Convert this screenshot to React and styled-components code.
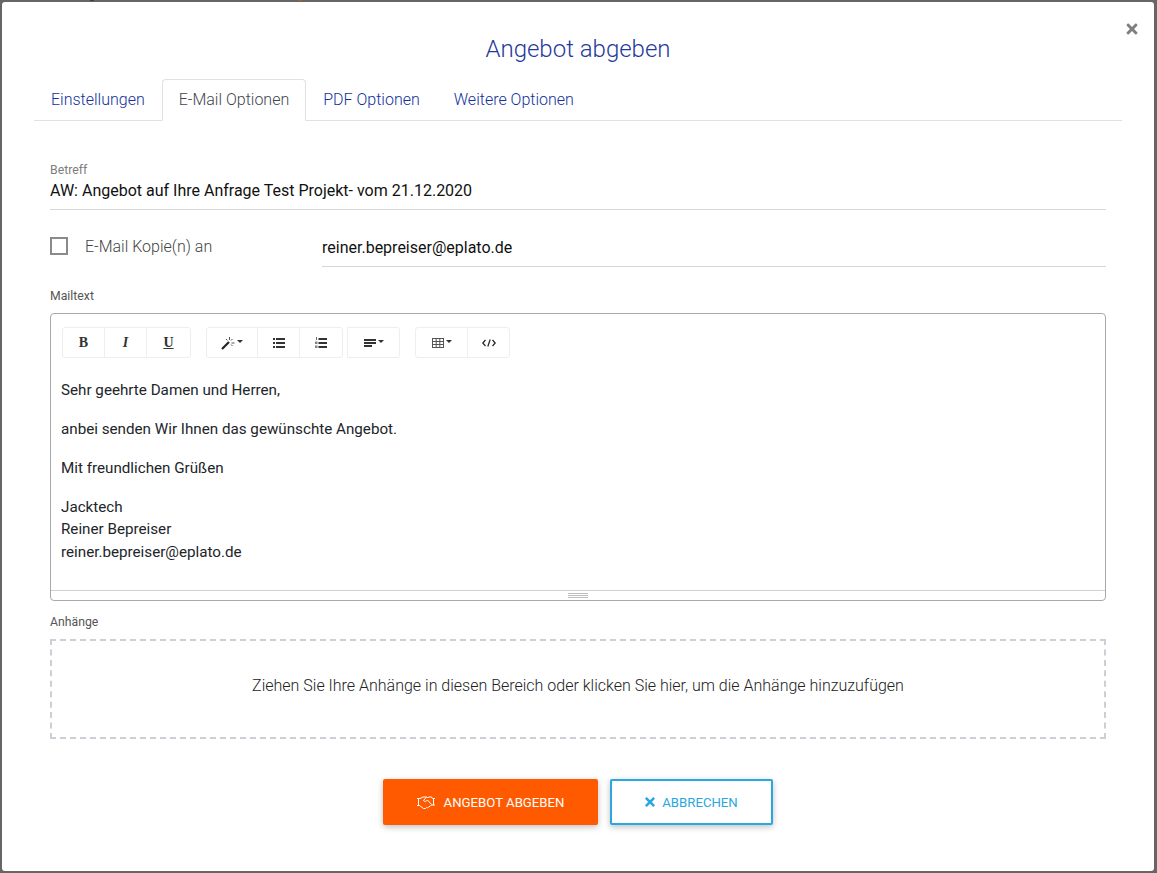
import React from 'react';
import styled, { createGlobalStyle } from 'styled-components';
import { FaTimes } from 'react-icons/fa';

const Global = createGlobalStyle`
  html, body { margin: 0; padding: 0; height: 100%; background: #666; }
  body { font-family: Roboto, "Liberation Sans", sans-serif; overflow: hidden; }
`;

const Backdrop = styled.div`
  position: relative;
  height: 873px;
  padding: 2px 3px 2px 2px;
  box-sizing: border-box;
`;

// bits of the page behind the dialog that show above its top edge
const Peek = styled.span`
  position: absolute;
  top: 0;
  left: ${p => p.$x}px;
  width: 4px;
  height: 1px;
  border-radius: 0 0 2px 2px;
  background: ${p => p.$color};
`;

const Modal = styled.div`
  position: relative;
  height: 869px;
  background: #fff;
  border-radius: 3px;
  padding: 0 32px;
  box-sizing: border-box;
`;

const Close = styled.span`
  position: absolute;
  top: 19px;
  right: 14px;
  display: flex;
  color: #7f7f7f;
  font-size: 16px;
`;

const Title = styled.h2`
  margin: 0;
  padding-top: 32px;
  height: 77px;
  box-sizing: border-box;
  text-align: center;
  font-size: 24px;
  line-height: 30px;
  font-weight: 300;
  color: #1f3a9c;
`;

const Tabs = styled.div`
  display: flex;
  height: 42px;
  box-sizing: border-box;
  border-bottom: 1px solid #dee2e6;
`;

const Tab = styled.div`
  padding: 0 16px;
  height: 42px;
  box-sizing: border-box;
  line-height: 40px;
  font-size: 16px;
  font-weight: 300;
  color: ${p => (p.$active ? '#3f4650' : '#12309c')};
  background: ${p => (p.$active ? '#fff' : 'transparent')};
  border: 1px solid ${p => (p.$active ? '#dee2e6' : 'transparent')};
  border-bottom-color: ${p => (p.$active ? '#fff' : 'transparent')};
  border-radius: 4px 4px 0 0;
`;

const Form = styled.div`
  padding: 0 16px;
`;

const SmallLabel = styled.div`
  font-size: 12.25px;
  line-height: 14px;
  color: ${p => (p.$muted ? '#7d7d7d' : '#555')};
`;

const SubjectField = styled.div`
  padding-top: 42px;
  height: 89px;
  box-sizing: border-box;
  border-bottom: 1px solid #d3d6dc;
`;

const Value = styled.div`
  font-size: 16px;
  line-height: 24px;
  color: #111;
`;

const SubjectValue = styled(Value)`
  margin-top: 2px;
`;

const CopyRow = styled.div`
  display: flex;
  height: 57px;
  align-items: flex-start;
`;

const CopyLabel = styled.div`
  display: flex;
  align-items: center;
  width: 272px;
  padding-top: 27px;
  color: #444;
  font-size: 16px;
  font-weight: 300;
  line-height: 20px;
`;

const Checkbox = styled.span`
  width: 14px;
  height: 14px;
  border: 2px solid #8a8a8a;
  margin-right: 17px;
  margin-top: -2px;
`;

const CopyField = styled.div`
  flex: 1;
  height: 57px;
  padding-top: 26px;
  box-sizing: border-box;
  border-bottom: 1px solid #d3d6dc;
`;

const MailLabel = styled(SmallLabel)`
  margin-top: 22px;
`;

const Editor = styled.div`
  margin-top: 10px;
  height: 288px;
  box-sizing: border-box;
  border: 1px solid #a9a9a9;
  border-radius: 4px;
  display: flex;
  flex-direction: column;
`;

const Toolbar = styled.div`
  display: flex;
  padding: 13px 0 0 11px;
`;

const Group = styled.div`
  display: flex;
  margin-right: ${p => p.$gap}px;
`;

const ToolButton = styled.div`
  width: ${p => p.$w}px;
  height: 29px;
  border: 1px solid #eceef1;
  margin-left: -1px;
  display: flex;
  align-items: center;
  justify-content: center;
  gap: 2px;
  color: #333;
  &:first-child { margin-left: 0; border-radius: 3px 0 0 3px; }
  &:last-child { border-radius: 0 3px 3px 0; }
`;

const ToolLetter = styled.span`
  font-family: "Liberation Serif", serif;
  font-size: 14px;
  font-weight: 700;
  color: #333;
  font-style: ${p => (p.$italic ? 'italic' : 'normal')};
  text-decoration: ${p => (p.$underline ? 'underline' : 'none')};
`;

const Caret = styled.span`
  width: 0;
  height: 0;
  margin-top: -2px;
  border: 3px solid transparent;
  border-top-color: #333;
  border-bottom: 0;
`;

const EditorBody = styled.div`
  flex: 1;
  padding: 21px 10px 0;
  font-size: 15.2px;
  line-height: 22.4px;
  color: #212529;
`;

const Para = styled.p`
  margin: 0 0 16.6px;
`;

const Resizer = styled.div`
  height: 9px;
  border-top: 1px solid #d0d0d0;
  display: flex;
  flex-direction: column;
  align-items: center;
  justify-content: center;
  gap: 1px;
`;

const Grip = styled.span`
  width: 20px;
  height: 1px;
  background: #bdbdbd;
`;

const AttachLabel = styled(SmallLabel)`
  margin-top: 14px;
`;

const Drop = styled.div`
  margin-top: 10px;
  height: 100px;
  padding-bottom: 7px;
  box-sizing: border-box;
  border: 2px dashed #ccd0d6;
  display: flex;
  align-items: center;
  justify-content: center;
  font-size: 16px;
  font-weight: 300;
  color: #222;
`;

const Actions = styled.div`
  display: flex;
  justify-content: center;
  gap: 12px;
  margin-top: 40px;
`;

const Button = styled.div`
  height: 46px;
  width: ${p => p.$w}px;
  padding-right: ${p => (p.$primary ? 0 : 2)}px;
  box-sizing: border-box;
  border-radius: 2px;
  display: flex;
  align-items: center;
  justify-content: center;
  font-size: 13.2px;
  font-weight: 400;
  text-transform: uppercase;
  box-shadow: 0 2px 6px rgba(0, 0, 0, 0.25);
  background: ${p => (p.$primary ? '#ff5a00' : '#fff')};
  color: ${p => (p.$primary ? '#fff' : '#29a7df')};
  border: ${p => (p.$primary ? '0' : '2px solid #29a7df')};
`;

const ButtonIcon = styled.span`
  display: flex;
  font-size: ${p => p.$size}px;
  margin-right: ${p => p.$gap}px;
`;

const Wand = () => (
  <svg width="14" height="14" viewBox="0 0 14 14">
    <path d="M1 13 L8 6" stroke="#222" strokeWidth="2.2" />
    <path d="M8.5 1v3M5 3l1.5 1.5M11.5 3 10 4.5M10.5 7h3M10 8.5l1.5 1.5" stroke="#555" strokeWidth="1" fill="none" />
  </svg>
);

const BulletList = () => (
  <svg width="12" height="10" viewBox="0 0 12 10" fill="#333">
    <rect x="0" y="0" width="2" height="2" /><rect x="3" y="0" width="9" height="2" />
    <rect x="0" y="4" width="2" height="2" /><rect x="3" y="4" width="9" height="2" />
    <rect x="0" y="8" width="2" height="2" /><rect x="3" y="8" width="9" height="2" />
  </svg>
);

const NumberList = () => (
  <svg width="12" height="11" viewBox="0 0 12 11" fill="#333">
    <rect x="3.5" y="1" width="8.5" height="2" /><rect x="3.5" y="5" width="8.5" height="2" /><rect x="3.5" y="9" width="8.5" height="2" />
    <rect x="1" y="0" width="1" height="3" opacity=".7" /><rect x="0" y="4.5" width="2.5" height="2.5" opacity=".6" /><rect x="0" y="8.5" width="2.5" height="2.5" opacity=".6" />
  </svg>
);

const AlignLines = () => (
  <svg width="12" height="8" viewBox="0 0 12 8" fill="#333">
    <rect x="0" y="0" width="12" height="2" /><rect x="0" y="3" width="12" height="2" /><rect x="0" y="6" width="8" height="2" />
  </svg>
);

const TableGrid = () => (
  <svg width="12" height="10" viewBox="0 0 12 10" fill="none" stroke="#555" strokeWidth="1">
    <rect x="0.5" y="0.5" width="11" height="9" />
    <path d="M4.2 0v10M7.8 0v10M0 3.5h12M0 6.5h12" />
  </svg>
);

const CodeTag = () => (
  <svg width="14" height="8" viewBox="0 0 14 8" fill="none" stroke="#222" strokeWidth="1.2">
    <path d="M3.5 1 .8 4l2.7 3M10.5 1 13.2 4l-2.7 3M8.2 .5 5.8 7.5" />
  </svg>
);

const HandshakeOutline = () => (
  <svg width="18" height="13" viewBox="0 0 18 13" fill="none" stroke="#fff" strokeWidth="1">
    <path d="M0 2.5h3l3-1.5h3.5l1 .5 2-.5h2l1 1.5h2.5" />
    <path d="M0 9.5h2.5l4 3h2l1-1 1 .5 1.5-1.5h1l1.5-1.5H18" />
    <path d="M9.5 1 6.5 4.5c.5 1 2 1 3 .5l1-1 4 4.5" />
    <path d="M1.5 2.5v7M16.5 2.5v6.5" />
  </svg>
);

export default function App() {
  return (
    <Backdrop>
      <Global />
      <Peek $x={90} $color="#3a3a3a" />
      <Peek $x={298} $color="#c8501e" />
      <Modal>
        <Close><FaTimes /></Close>
        <Title>Angebot abgeben</Title>
        <Tabs>
          <Tab>Einstellungen</Tab>
          <Tab $active>E-Mail Optionen</Tab>
          <Tab>PDF Optionen</Tab>
          <Tab>Weitere Optionen</Tab>
        </Tabs>
        <Form>
          <SubjectField>
            <SmallLabel $muted>Betreff</SmallLabel>
            <SubjectValue>AW: Angebot auf Ihre Anfrage Test Projekt- vom 21.12.2020</SubjectValue>
          </SubjectField>
          <CopyRow>
            <CopyLabel><Checkbox />E-Mail Kopie(n) an</CopyLabel>
            <CopyField><Value>reiner.bepreiser@eplato.de</Value></CopyField>
          </CopyRow>
          <MailLabel>Mailtext</MailLabel>
          <Editor>
            <Toolbar>
              <Group $gap={15}>
                <ToolButton $w={41}><ToolLetter>B</ToolLetter></ToolButton>
                <ToolButton $w={41}><ToolLetter $italic>I</ToolLetter></ToolButton>
                <ToolButton $w={43}><ToolLetter $underline>U</ToolLetter></ToolButton>
              </Group>
              <Group $gap={4}>
                <ToolButton $w={50}><Wand /><Caret /></ToolButton>
                <ToolButton $w={41}><BulletList /></ToolButton>
                <ToolButton $w={42}><NumberList /></ToolButton>
              </Group>
              <Group $gap={15}>
                <ToolButton $w={51}><AlignLines /><Caret /></ToolButton>
              </Group>
              <Group $gap={0}>
                <ToolButton $w={51}><TableGrid /><Caret /></ToolButton>
                <ToolButton $w={41}><CodeTag /></ToolButton>
              </Group>
            </Toolbar>
            <EditorBody>
              <Para>Sehr geehrte Damen und Herren,</Para>
              <Para>anbei senden Wir Ihnen das gewünschte Angebot.</Para>
              <Para>Mit freundlichen Grüßen</Para>
              <Para>Jacktech<br />Reiner Bepreiser<br />reiner.bepreiser@eplato.de</Para>
            </EditorBody>
            <Resizer><Grip /><Grip /><Grip /></Resizer>
          </Editor>
          <AttachLabel>Anhänge</AttachLabel>
          <Drop>Ziehen Sie Ihre Anhänge in diesen Bereich oder klicken Sie hier, um die Anhänge hinzuzufügen</Drop>
          <Actions>
            <Button $primary $w={215}><ButtonIcon $size={18} $gap={9}><HandshakeOutline /></ButtonIcon>Angebot abgeben</Button>
            <Button $w={163}><ButtonIcon $size={14} $gap={5}><FaTimes /></ButtonIcon>Abbrechen</Button>
          </Actions>
        </Form>
      </Modal>
    </Backdrop>
  );
}
